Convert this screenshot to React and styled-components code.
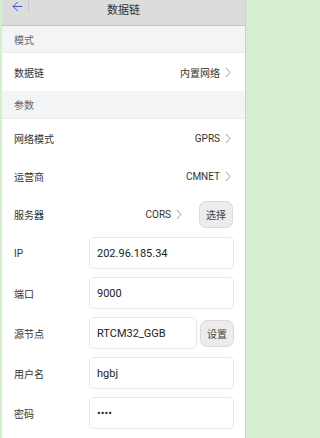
import styled, { createGlobalStyle } from "styled-components";
import { ArrowLeft } from "lucide-react";

const GlobalStyle = createGlobalStyle`
  html, body {
    margin: 0;
    padding: 0;
    background: #d6eed0;
  }
  * {
    box-sizing: border-box;
  }
`;

const Page = styled.div`
  margin-left: 2px;
  width: 244px;
  min-height: 438px;
  background: #fff;
  border-right: 1px solid #cfcfcf;
  font-family: Roboto, "Noto Sans CJK SC", sans-serif;
  color: #333;
`;

const Header = styled.div`
  height: 26px;
  background: #dcdcdc;
  border-bottom: 1px solid #c4c4c4;
  position: relative;
`;

const HeaderRow = styled.div`
  height: 15px;
  display: flex;
  align-items: center;
`;

const Back = styled.div`
  width: 27px;
  height: 13px;
  display: flex;
  align-items: center;
  padding-left: 8px;
  color: #3446d8;
  border-right: 1px solid #c9c9c9;
  align-self: flex-start;
`;

const Title = styled.div`
  position: absolute;
  left: 0;
  right: 0;
  top: 1px;
  text-align: center;
  font-size: 11px;
  color: #333;
  pointer-events: none;
`;

const Section = styled.div`
  height: ${(p) => p.h}px;
  background: #f3f4f6;
  display: flex;
  align-items: center;
  padding-left: 12px;
  font-size: 10px;
  color: #666;
  border-bottom: 1px solid #ececec;
`;

const Row = styled.div`
  height: 38px;
  display: flex;
  align-items: center;
  padding: 0 ${(p) => p.pr || 14}px 0 12px;
  font-size: 10px;
  background: #fff;
`;

const Label = styled.span`
  flex: 1;
  color: #333;
`;

const Value = styled.span`
  display: flex;
  align-items: center;
  gap: 5px;
  color: #333;
  margin-right: ${(p) => p.mr || 0}px;
`;

const Btn = styled.button`
  width: 34px;
  height: 27px;
  padding: 0;
  background: #ececec;
  border: 1px solid #dadada;
  border-radius: 7px;
  font-family: Roboto, "Noto Sans CJK SC", sans-serif;
  font-size: 10px;
  color: #444;
  flex-shrink: 0;
`;

const InputRow = styled.div`
  height: 40px;
  display: grid;
  grid-template-columns: 72px 1fr auto;
  align-items: center;
  column-gap: 3px;
  padding: 0 11px 0 12px;
  font-size: 10px;
`;

const Field = styled.input`
  height: 32px;
  width: 100%;
  min-width: 0;
  border: 1px solid #e8e8e8;
  border-radius: 5px;
  padding: 0 0 0 7px;
  font-family: Roboto, sans-serif;
  font-size: 11px;
  color: #222;
  background: #fff;
  outline: none;
  grid-column: ${(p) => (p.$span ? "2 / 4" : "2 / 3")};
`;

const Chevron = () => (
  <svg width="6" height="11" viewBox="0 0 6 11">
    <polyline
      points="1,1 5,5.5 1,10"
      fill="none"
      stroke="#9a9a9a"
      strokeWidth="1"
    />
  </svg>
);

const pickRows = [
  { label: "网络模式", value: "GPRS" },
  { label: "运营商", value: "CMNET" },
];

const fields = [
  { label: "IP", value: "202.96.185.34" },
  { label: "端口", value: "9000" },
  { label: "源节点", value: "RTCM32_GGB", btn: "设置" },
  { label: "用户名", value: "hgbj" },
  { label: "密码", value: "1234", type: "password" },
];

export default function App() {
  return (
    <>
      <GlobalStyle />
      <Page>
        <Header>
          <HeaderRow>
            <Back>
              <ArrowLeft size={15} strokeWidth={1.5} />
            </Back>
          </HeaderRow>
          <Title>数据链</Title>
        </Header>

        <Section h={27}>模式</Section>
        <Row>
          <Label>数据链</Label>
          <Value>
            内置网络 <Chevron />
          </Value>
        </Row>

        <Section h={28}>参数</Section>
        {pickRows.map((r) => (
          <Row key={r.label}>
            <Label>{r.label}</Label>
            <Value>
              {r.value} <Chevron />
            </Value>
          </Row>
        ))}
        <Row pr={12}>
          <Label>服务器</Label>
          <Value mr={17}>
            CORS <Chevron />
          </Value>
          <Btn>选择</Btn>
        </Row>

        {fields.map((f) => (
          <InputRow key={f.label}>
            <Label>{f.label}</Label>
            <Field
              readOnly
              type={f.type || "text"}
              defaultValue={f.value}
              $span={!f.btn}
            />
            {f.btn && <Btn>{f.btn}</Btn>}
          </InputRow>
        ))}
      </Page>
    </>
  );
}
